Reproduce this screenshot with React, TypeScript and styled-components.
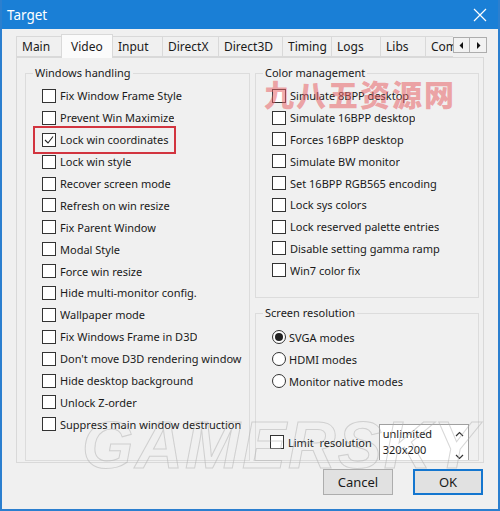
import React from 'react';
import styled, { createGlobalStyle } from 'styled-components';

const GlobalStyle = createGlobalStyle`
  html, body { margin: 0; padding: 0; background: #f0f0f0; }
  body { font-family: "Noto Sans", "Liberation Sans", sans-serif; color: #1a1a1a; }
`;

const Window = styled.div`
  position: relative;
  width: 500px;
  height: 511px;
  box-sizing: border-box;
  border: 2px solid #2b7fcf;
  border-top: 0;
  background: #f0f0f0;
  display: flex;
  flex-direction: column;
  overflow: hidden;
`;

const TitleBar = styled.div`
  height: 29px;
  margin: 0 -2px;
  background: #1a7fd6;
  color: #fff;
  display: flex;
  align-items: center;
  justify-content: space-between;
  padding: 0 13px 0 7px;
  font-size: 13.5px;
`;

const Body = styled.div`
  display: flex;
  flex-direction: column;
  padding: 5px 11px 0 14px;
`;

const TabStrip = styled.div`
  position: relative;
  z-index: 1;
  height: 23px;
  display: flex;
  align-items: flex-end;
`;

const Tabs = styled.div`
  flex: 1;
  display: flex;
  align-items: flex-end;
  overflow: hidden;
  height: 24px;
  margin-bottom: -1px;
  align-self: flex-end;
`;

const Tab = styled.div<{ $w: number; $active?: boolean }>`
  flex: 0 0 ${p => p.$w}px;
  box-sizing: border-box;
  height: ${p => (p.$active ? 24 : 21)}px;
  margin-bottom: ${p => (p.$active ? 0 : 1)}px;
  padding-left: ${p => (p.$active ? 9 : 5)}px;
  border: 1px solid #d9d9d9;
  border-bottom: ${p => (p.$active ? 'none' : '1px solid #d9d9d9')};
  margin-right: -1px;
  background: ${p => (p.$active ? '#fbfbfb' : '#f0f0f0')};
  position: relative;
  z-index: ${p => (p.$active ? 2 : 1)};
  display: flex;
  align-items: center;
  font-size: 12px;
  white-space: nowrap;
`;

const ScrollArrows = styled.div`
  display: flex;
  align-self: flex-start;
  margin-top: 3px;
`;

const ArrowBtn = styled.div`
  width: 17px;
  height: 16px;
  box-sizing: border-box;
  border: 1px solid #adadad;
  background: #f2f2f2;
  display: flex;
  align-items: center;
  justify-content: center;
  & + & { border-left: 0; }
`;

const Panel = styled.div`
  height: 406px;
  margin-right: 3px;
  box-sizing: border-box;
  border: 1px solid #d9d9d9;
  background: #f0f0f0;
  padding: 15px 3px 1px 8px;
  display: grid;
  grid-template-columns: 225px 224px;
  column-gap: 5px;
  align-items: start;
`;

const Column = styled.div`
  display: flex;
  flex-direction: column;
  gap: 15px;
`;

const Group = styled.section<{ $h: number }>`
  height: ${p => p.$h}px;
  box-sizing: border-box;
  border: 1px solid #dcdcdc;
  padding: 0 4px 0 16px;
  display: flex;
  flex-direction: column;
  min-width: 0;
`;

const Caption = styled.div<{ $gap?: number }>`
  align-self: flex-start;
  margin: -9px 0 ${p => p.$gap ?? 4}px -9px;
  padding: 0 2px;
  background: #f0f0f0;
  font-size: 11px;
  line-height: 16px;
`;

const Row = styled.div<{ $h: number; $mark?: boolean }>`
  position: relative;
  height: ${p => p.$h}px;
  flex: 0 0 auto;
  display: flex;
  align-items: center;
  font-size: 11px;
  white-space: nowrap;
  &::after {
    content: '';
    display: ${p => (p.$mark ? 'block' : 'none')};
    position: absolute;
    left: -9px;
    top: -3px;
    width: 143px;
    height: 28px;
    box-sizing: border-box;
    border: 2px solid #d2343f;
  }
`;

const Label = styled.span`
  overflow: hidden;
  text-overflow: clip;
`;

const Box = styled.span`
  flex: 0 0 14px;
  width: 14px;
  height: 14px;
  box-sizing: border-box;
  border: 1px solid #333;
  background: #fff;
  margin-right: 4px;
  display: flex;
  align-items: center;
  justify-content: center;
`;

const Radio = styled.span<{ $on?: boolean }>`
  flex: 0 0 14px;
  width: 14px;
  height: 14px;
  box-sizing: border-box;
  border: 1px solid #333;
  border-radius: 50%;
  background: #fff;
  margin-right: 3px;
  display: flex;
  align-items: center;
  justify-content: center;
  &::after {
    content: '';
    display: ${p => (p.$on ? 'block' : 'none')};
    width: 8px;
    height: 8px;
    border-radius: 50%;
    background: #222;
  }
`;

const LimitRow = styled.div`
  margin-top: auto;
  margin-left: -2px;
  display: flex;
  align-items: center;
  font-size: 11px;
`;

const LimitText = styled.span`
  white-space: pre;
  margin-right: 7px;
`;

const ListBox = styled.div`
  width: 90px;
  height: 36px;
  box-sizing: border-box;
  border: 1px solid #a0a0a0;
  border-bottom: 0;
  background: #fff;
  display: flex;
  overflow: hidden;
  font-size: 11px;
  line-height: 16px;
`;

const Items = styled.div`
  flex: 1;
  padding: 1px 0 0 3px;
`;

const ScrollCol = styled.div`
  width: 16px;
  display: flex;
  flex-direction: column;
  justify-content: space-between;
  align-items: center;
  padding: 6px 0 0;
`;

const ButtonRow = styled.div`
  display: flex;
  justify-content: flex-end;
  gap: 20px;
  margin: 6px 4px 0 0;
`;

const Button = styled.div<{ $primary?: boolean }>`
  width: 70px;
  height: 26px;
  box-sizing: border-box;
  border: ${p => (p.$primary ? '2px solid #1476cf' : '1px solid #adadad')};
  background: #e1e1e1;
  display: flex;
  align-items: center;
  justify-content: center;
  font-size: 13px;
`;

const ChineseMark = styled.div`
  position: absolute;
  left: 262px;
  top: 76px;
  font-family: "Noto Sans CJK SC", sans-serif;
  font-weight: 900;
  font-size: 30px;
  letter-spacing: 2px;
  line-height: 34px;
  color: rgba(232, 96, 100, 0.55);
  pointer-events: none;
`;

const GamerskyMark = styled.div`
  position: absolute;
  left: 80px;
  top: 412px;
  font-family: "Liberation Sans", sans-serif;
  font-weight: 700;
  font-style: italic;
  font-size: 66px;
  line-height: 66px;
  letter-spacing: 2px;
  color: transparent;
  -webkit-text-stroke: 1px rgba(175, 175, 175, 0.5);
  pointer-events: none;
`;

const Check = () => (
  <svg width="10" height="10" viewBox="0 0 10 10">
    <polyline points="1,5 4,8 9,1.5" fill="none" stroke="#222" strokeWidth="1.1" />
  </svg>
);

const Tri = ({ dir }: { dir: 'l' | 'r' }) => (
  <svg width="5" height="7" viewBox="0 0 5 7">
    <polygon points={dir === 'l' ? '4,0 4,7 0.5,3.5' : '1,0 1,7 4.5,3.5'} fill="#111" />
  </svg>
);

const Chevron = ({ up }: { up?: boolean }) => (
  <svg width="9" height="6" viewBox="0 0 9 6">
    <polyline points={up ? '1,5 4.5,1.5 8,5' : '1,1 4.5,4.5 8,1'} fill="none" stroke="#333" strokeWidth="1.2" />
  </svg>
);

const tabs: [string, number][] = [
  ['Main', 46],
  ['Video', 52],
  ['Input', 51],
  ['DirectX', 57],
  ['Direct3D', 65],
  ['Timing', 50],
  ['Logs', 50],
  ['Libs', 46],
  ['Compat', 60],
];

const windowOpts = [
  'Fix Window Frame Style',
  'Prevent Win Maximize',
  'Lock win coordinates',
  'Lock win style',
  'Recover screen mode',
  'Refresh on win resize',
  'Fix Parent Window',
  'Modal Style',
  'Force win resize',
  'Hide multi-monitor config.',
  'Wallpaper mode',
  'Fix Windows Frame in D3D',
  "Don't move D3D rendering window",
  'Hide desktop background',
  'Unlock Z-order',
  'Suppress main window destruction',
];

const colorOpts = [
  'Simulate 8BPP desktop',
  'Simulate 16BPP desktop',
  'Forces 16BPP desktop',
  'Simulate BW monitor',
  'Set 16BPP RGB565 encoding',
  'Lock sys colors',
  'Lock reserved palette entries',
  'Disable setting gamma ramp',
  'Win7 color fix',
];

const resOpts = ['SVGA modes', 'HDMI modes', 'Monitor native modes'];

export default function App() {
  return (
    <>
      <GlobalStyle />
      <Window>
        <TitleBar>
          <span>Target</span>
          <svg width="14" height="14" viewBox="0 0 14 14">
            <path d="M1 1 L13 13 M13 1 L1 13" stroke="#fff" strokeWidth="1.2" />
          </svg>
        </TitleBar>
        <Body>
          <TabStrip>
            <Tabs>
              {tabs.map(([name, w]) => (
                <Tab key={name} $w={w} $active={name === 'Video'}>
                  {name}
                </Tab>
              ))}
            </Tabs>
            <ScrollArrows>
              <ArrowBtn><Tri dir="l" /></ArrowBtn>
              <ArrowBtn><Tri dir="r" /></ArrowBtn>
            </ScrollArrows>
          </TabStrip>
          <Panel>
            <Group $h={388}>
              <Caption>Windows handling</Caption>
              {windowOpts.map((o, i) => (
                <Row key={o} $h={21.9} $mark={i === 2}>
                  <Box>{i === 2 && <Check />}</Box>
                  <Label>{o}</Label>
                </Row>
              ))}
            </Group>
            <Column>
              <Group $h={225}>
                <Caption>Color management</Caption>
                {colorOpts.map(o => (
                  <Row key={o} $h={21.8}>
                    <Box />
                    <Label>{o}</Label>
                  </Row>
                ))}
              </Group>
              <Group $h={148}>
                <Caption $gap={5}>Screen resolution</Caption>
                {resOpts.map((o, i) => (
                  <Row key={o} $h={22}>
                    <Radio $on={i === 0} />
                    <Label>{o}</Label>
                  </Row>
                ))}
                <LimitRow>
                  <Box />
                  <LimitText>Limit  resolution</LimitText>
                  <ListBox>
                    <Items>
                      <div>unlimited</div>
                      <div>320x200</div>
                      <div>400x300</div>
                    </Items>
                    <ScrollCol>
                      <Chevron up />
                      <Chevron />
                    </ScrollCol>
                  </ListBox>
                </LimitRow>
              </Group>
            </Column>
          </Panel>
          <ButtonRow>
            <Button>Cancel</Button>
            <Button $primary>OK</Button>
          </ButtonRow>
        </Body>
        <ChineseMark>九八五资源网</ChineseMark>
        <GamerskyMark>GAMERSKY</GamerskyMark>
      </Window>
    </>
  );
}
